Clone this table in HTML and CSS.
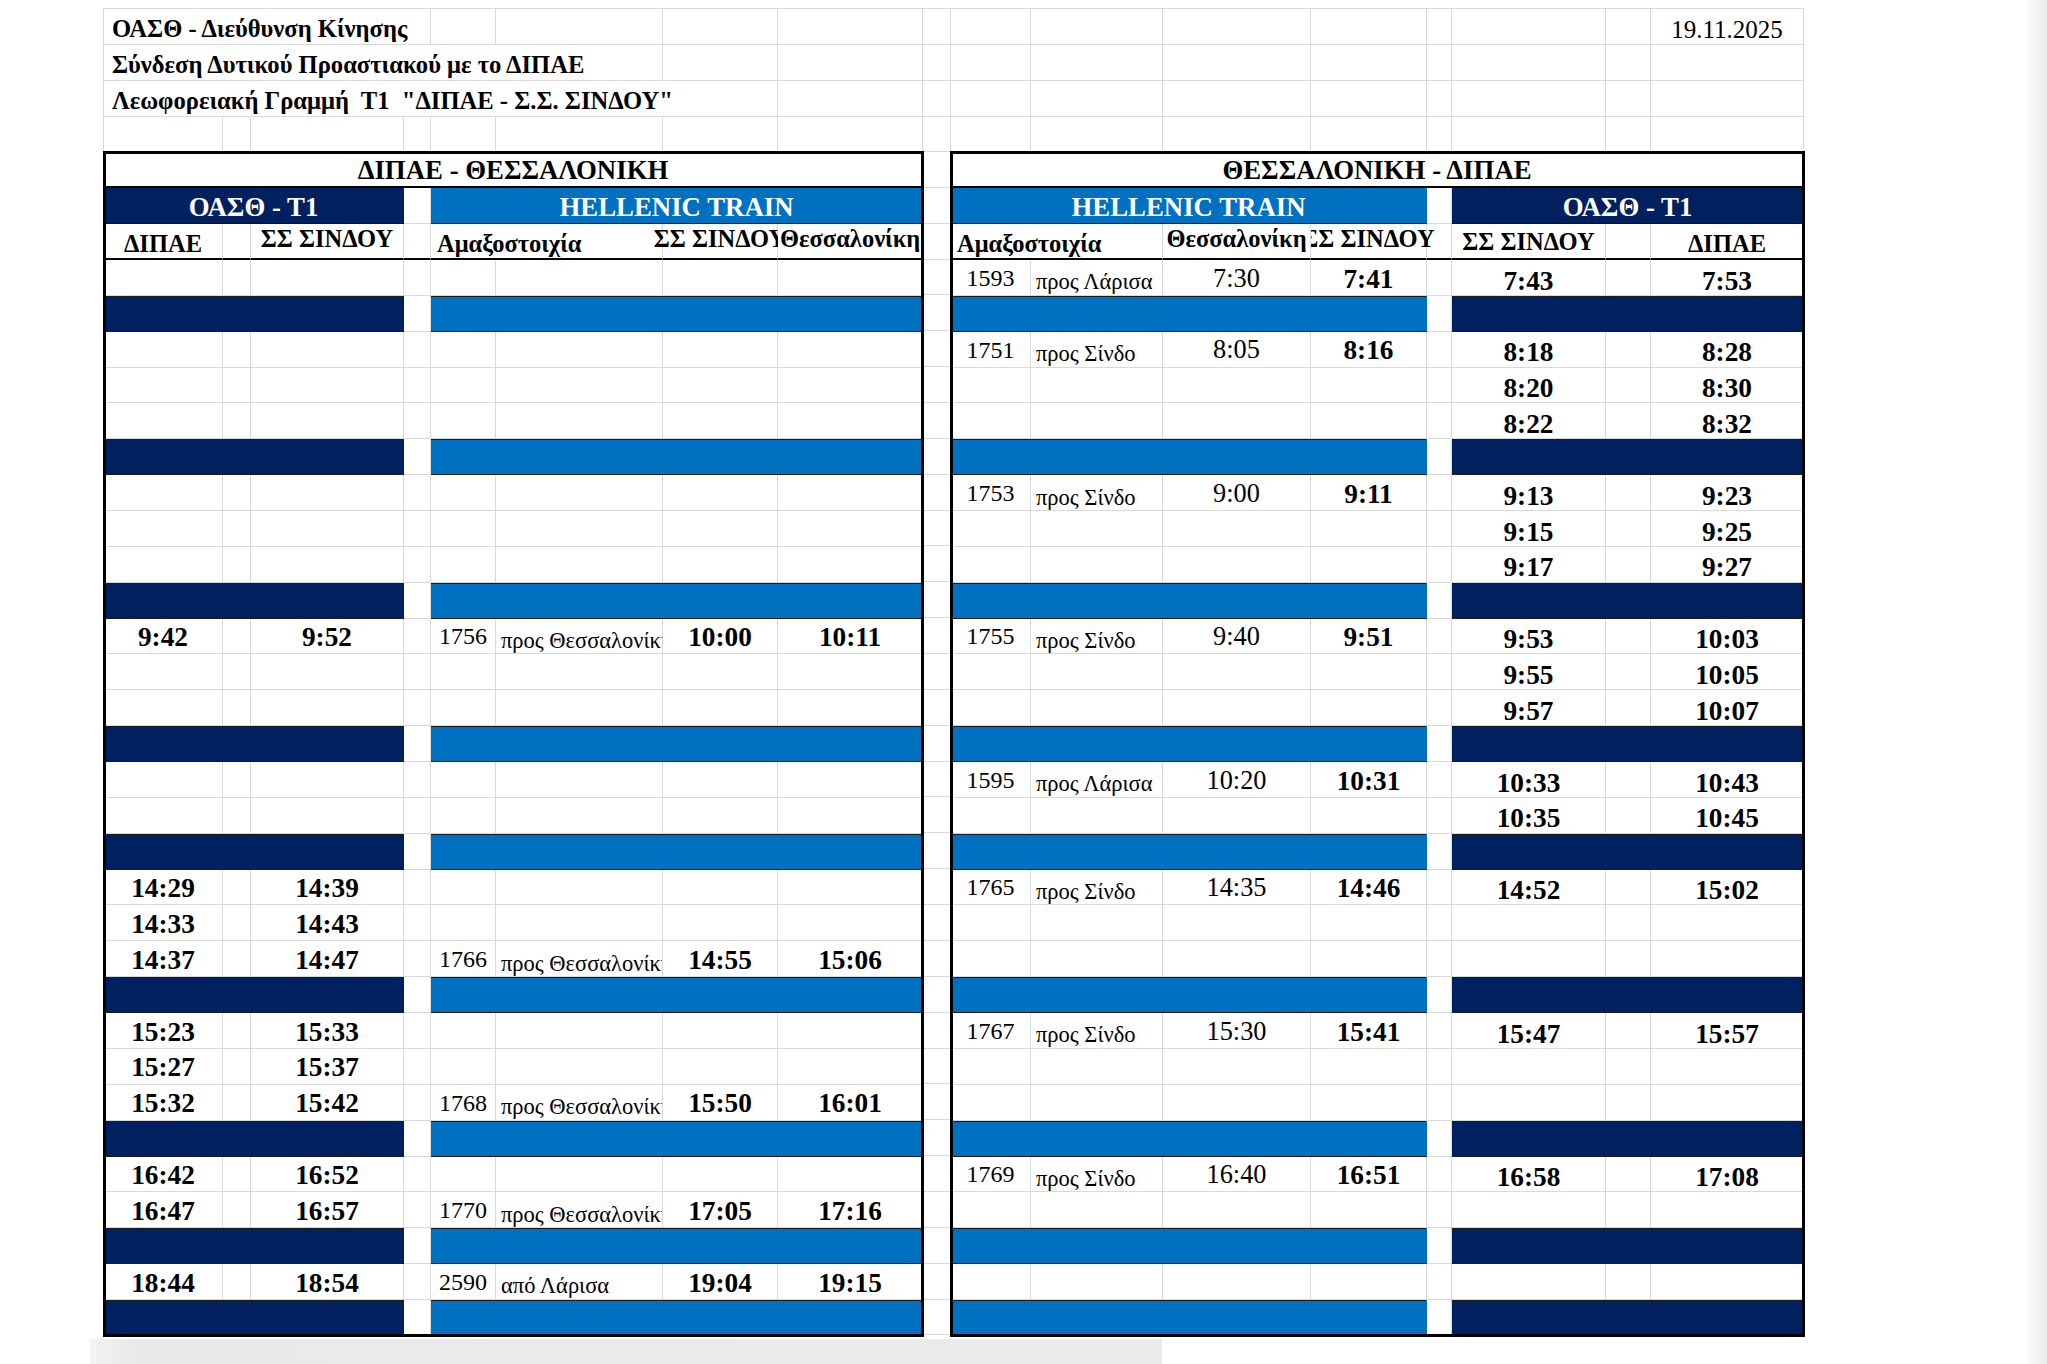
FILE: index.html
```html
<!DOCTYPE html>
<html lang="el">
<head>
<meta charset="utf-8">
<title>ΟΑΣΘ - Τ1</title>
<link rel="stylesheet" href="styles.css">
</head>
<body>
<div class="page">
  <div class="topgrid">
    <div class="c tt s4">ΟΑΣΘ - Διεύθυνση Κίνησης</div>
    <div class="c"></div><div class="c"></div><div class="c"></div><div class="c"></div><div class="c"></div><div class="c"></div><div class="c"></div><div class="c"></div><div class="c"></div><div class="c"></div><div class="c"></div><div class="c"></div>
    <div class="c date">19.11.2025</div>

    <div class="c tt s6">Σύνδεση Δυτικού Προαστιακού με το ΔΙΠΑΕ</div>
    <div class="c"></div><div class="c"></div><div class="c"></div><div class="c"></div><div class="c"></div><div class="c"></div><div class="c"></div><div class="c"></div><div class="c"></div><div class="c"></div><div class="c"></div>

    <div class="c tt s7">Λεωφορειακή Γραμμή&nbsp; Τ1&nbsp; "ΔΙΠΑΕ - Σ.Σ. ΣΙΝΔΟΥ"</div>
    <div class="c"></div><div class="c"></div><div class="c"></div><div class="c"></div><div class="c"></div><div class="c"></div><div class="c"></div><div class="c"></div><div class="c"></div><div class="c"></div>

    <div class="c"></div><div class="c"></div><div class="c"></div><div class="c"></div><div class="c"></div><div class="c"></div><div class="c"></div><div class="c"></div><div class="c"></div><div class="c"></div><div class="c"></div><div class="c"></div><div class="c"></div><div class="c"></div><div class="c"></div><div class="c"></div><div class="c"></div>
  </div>

  <div class="tables">
    <div class="tbl tl">
      <div class="c title s8">ΔΙΠΑΕ - ΘΕΣΣΑΛΟΝΙΚΗ</div>
      <div class="c navy hd s3">ΟΑΣΘ - Τ1</div><div class="c hdgap"></div><div class="c blue hd s4">HELLENIC TRAIN</div>
      <div class="c ch">ΔΙΠΑΕ</div><div class="c ch"></div><div class="c ch hi">ΣΣ ΣΙΝΔΟΥ</div><div class="c ch"></div><div class="c ch lft s2">Αμαξοστοιχία</div><div class="c ch hi">ΣΣ ΣΙΝΔΟΥ</div><div class="c ch hi lft tight cover">Θεσσαλονίκη</div>

      <div class="c"></div><div class="c"></div><div class="c"></div><div class="c"></div><div class="c"></div><div class="c"></div><div class="c"></div><div class="c"></div>
      <div class="c navy s3 sep"></div><div class="c"></div><div class="c blue s4 sep"></div>
      <div class="c"></div><div class="c"></div><div class="c"></div><div class="c"></div><div class="c"></div><div class="c"></div><div class="c"></div><div class="c"></div>
      <div class="c"></div><div class="c"></div><div class="c"></div><div class="c"></div><div class="c"></div><div class="c"></div><div class="c"></div><div class="c"></div>
      <div class="c"></div><div class="c"></div><div class="c"></div><div class="c"></div><div class="c"></div><div class="c"></div><div class="c"></div><div class="c"></div>
      <div class="c navy s3 sep"></div><div class="c"></div><div class="c blue s4 sep"></div>
      <div class="c"></div><div class="c"></div><div class="c"></div><div class="c"></div><div class="c"></div><div class="c"></div><div class="c"></div><div class="c"></div>
      <div class="c"></div><div class="c"></div><div class="c"></div><div class="c"></div><div class="c"></div><div class="c"></div><div class="c"></div><div class="c"></div>
      <div class="c"></div><div class="c"></div><div class="c"></div><div class="c"></div><div class="c"></div><div class="c"></div><div class="c"></div><div class="c"></div>
      <div class="c navy s3 sep"></div><div class="c"></div><div class="c blue s4 sep"></div>
      <div class="c b">9:42</div><div class="c"></div><div class="c b">9:52</div><div class="c"></div><div class="c n">1756</div><div class="c d">προς Θεσσαλονίκη</div><div class="c b">10:00</div><div class="c b">10:11</div>
      <div class="c"></div><div class="c"></div><div class="c"></div><div class="c"></div><div class="c"></div><div class="c"></div><div class="c"></div><div class="c"></div>
      <div class="c"></div><div class="c"></div><div class="c"></div><div class="c"></div><div class="c"></div><div class="c"></div><div class="c"></div><div class="c"></div>
      <div class="c navy s3 sep"></div><div class="c"></div><div class="c blue s4 sep"></div>
      <div class="c"></div><div class="c"></div><div class="c"></div><div class="c"></div><div class="c"></div><div class="c"></div><div class="c"></div><div class="c"></div>
      <div class="c"></div><div class="c"></div><div class="c"></div><div class="c"></div><div class="c"></div><div class="c"></div><div class="c"></div><div class="c"></div>
      <div class="c navy s3 sep"></div><div class="c"></div><div class="c blue s4 sep"></div>
      <div class="c b">14:29</div><div class="c"></div><div class="c b">14:39</div><div class="c"></div><div class="c"></div><div class="c"></div><div class="c"></div><div class="c"></div>
      <div class="c b">14:33</div><div class="c"></div><div class="c b">14:43</div><div class="c"></div><div class="c"></div><div class="c"></div><div class="c"></div><div class="c"></div>
      <div class="c b">14:37</div><div class="c"></div><div class="c b">14:47</div><div class="c"></div><div class="c n">1766</div><div class="c d">προς Θεσσαλονίκη</div><div class="c b">14:55</div><div class="c b">15:06</div>
      <div class="c navy s3 sep"></div><div class="c"></div><div class="c blue s4 sep"></div>
      <div class="c b">15:23</div><div class="c"></div><div class="c b">15:33</div><div class="c"></div><div class="c"></div><div class="c"></div><div class="c"></div><div class="c"></div>
      <div class="c b">15:27</div><div class="c"></div><div class="c b">15:37</div><div class="c"></div><div class="c"></div><div class="c"></div><div class="c"></div><div class="c"></div>
      <div class="c b">15:32</div><div class="c"></div><div class="c b">15:42</div><div class="c"></div><div class="c n">1768</div><div class="c d">προς Θεσσαλονίκη</div><div class="c b">15:50</div><div class="c b">16:01</div>
      <div class="c navy s3 sep"></div><div class="c"></div><div class="c blue s4 sep"></div>
      <div class="c b">16:42</div><div class="c"></div><div class="c b">16:52</div><div class="c"></div><div class="c"></div><div class="c"></div><div class="c"></div><div class="c"></div>
      <div class="c b">16:47</div><div class="c"></div><div class="c b">16:57</div><div class="c"></div><div class="c n">1770</div><div class="c d">προς Θεσσαλονίκη</div><div class="c b">17:05</div><div class="c b">17:16</div>
      <div class="c navy s3 sep"></div><div class="c"></div><div class="c blue s4 sep"></div>
      <div class="c b">18:44</div><div class="c"></div><div class="c b">18:54</div><div class="c"></div><div class="c n">2590</div><div class="c d">από Λάρισα</div><div class="c b">19:04</div><div class="c b">19:15</div>
      <div class="c navy s3 sep"></div><div class="c"></div><div class="c blue s4 sep"></div>
    </div>

    <div class="gapcol"></div>

    <div class="tbl tr">
      <div class="c title s8">ΘΕΣΣΑΛΟΝΙΚΗ - ΔΙΠΑΕ</div>
      <div class="c blue hd s4">HELLENIC TRAIN</div><div class="c hdgap"></div><div class="c navy hd s3">ΟΑΣΘ - Τ1</div>
      <div class="c ch lft s2">Αμαξοστοιχία</div><div class="c ch hi cover">Θεσσαλονίκη</div><div class="c ch hi">ΣΣ ΣΙΝΔΟΥ</div><div class="c ch"></div><div class="c ch mid">ΣΣ ΣΙΝΔΟΥ</div><div class="c ch"></div><div class="c ch">ΔΙΠΑΕ</div>

      <div class="c n">1593</div><div class="c d">προς Λάρισα</div><div class="c r">7:30</div><div class="c b">7:41</div><div class="c"></div><div class="c b bb">7:43</div><div class="c"></div><div class="c b bb">7:53</div>
      <div class="c blue s4 sep"></div><div class="c"></div><div class="c navy s3 sep"></div>
      <div class="c n">1751</div><div class="c d">προς Σίνδο</div><div class="c r">8:05</div><div class="c b">8:16</div><div class="c"></div><div class="c b bb">8:18</div><div class="c"></div><div class="c b bb">8:28</div>
      <div class="c"></div><div class="c"></div><div class="c"></div><div class="c"></div><div class="c"></div><div class="c b bb">8:20</div><div class="c"></div><div class="c b bb">8:30</div>
      <div class="c"></div><div class="c"></div><div class="c"></div><div class="c"></div><div class="c"></div><div class="c b bb">8:22</div><div class="c"></div><div class="c b bb">8:32</div>
      <div class="c blue s4 sep"></div><div class="c"></div><div class="c navy s3 sep"></div>
      <div class="c n">1753</div><div class="c d">προς Σίνδο</div><div class="c r">9:00</div><div class="c b">9:11</div><div class="c"></div><div class="c b bb">9:13</div><div class="c"></div><div class="c b bb">9:23</div>
      <div class="c"></div><div class="c"></div><div class="c"></div><div class="c"></div><div class="c"></div><div class="c b bb">9:15</div><div class="c"></div><div class="c b bb">9:25</div>
      <div class="c"></div><div class="c"></div><div class="c"></div><div class="c"></div><div class="c"></div><div class="c b bb">9:17</div><div class="c"></div><div class="c b bb">9:27</div>
      <div class="c blue s4 sep"></div><div class="c"></div><div class="c navy s3 sep"></div>
      <div class="c n">1755</div><div class="c d">προς Σίνδο</div><div class="c r">9:40</div><div class="c b">9:51</div><div class="c"></div><div class="c b bb">9:53</div><div class="c"></div><div class="c b bb">10:03</div>
      <div class="c"></div><div class="c"></div><div class="c"></div><div class="c"></div><div class="c"></div><div class="c b bb">9:55</div><div class="c"></div><div class="c b bb">10:05</div>
      <div class="c"></div><div class="c"></div><div class="c"></div><div class="c"></div><div class="c"></div><div class="c b bb">9:57</div><div class="c"></div><div class="c b bb">10:07</div>
      <div class="c blue s4 sep"></div><div class="c"></div><div class="c navy s3 sep"></div>
      <div class="c n">1595</div><div class="c d">προς Λάρισα</div><div class="c r">10:20</div><div class="c b">10:31</div><div class="c"></div><div class="c b bb">10:33</div><div class="c"></div><div class="c b bb">10:43</div>
      <div class="c"></div><div class="c"></div><div class="c"></div><div class="c"></div><div class="c"></div><div class="c b bb">10:35</div><div class="c"></div><div class="c b bb">10:45</div>
      <div class="c blue s4 sep"></div><div class="c"></div><div class="c navy s3 sep"></div>
      <div class="c n">1765</div><div class="c d">προς Σίνδο</div><div class="c r">14:35</div><div class="c b">14:46</div><div class="c"></div><div class="c b bb">14:52</div><div class="c"></div><div class="c b bb">15:02</div>
      <div class="c"></div><div class="c"></div><div class="c"></div><div class="c"></div><div class="c"></div><div class="c"></div><div class="c"></div><div class="c"></div>
      <div class="c"></div><div class="c"></div><div class="c"></div><div class="c"></div><div class="c"></div><div class="c"></div><div class="c"></div><div class="c"></div>
      <div class="c blue s4 sep"></div><div class="c"></div><div class="c navy s3 sep"></div>
      <div class="c n">1767</div><div class="c d">προς Σίνδο</div><div class="c r">15:30</div><div class="c b">15:41</div><div class="c"></div><div class="c b bb">15:47</div><div class="c"></div><div class="c b bb">15:57</div>
      <div class="c"></div><div class="c"></div><div class="c"></div><div class="c"></div><div class="c"></div><div class="c"></div><div class="c"></div><div class="c"></div>
      <div class="c"></div><div class="c"></div><div class="c"></div><div class="c"></div><div class="c"></div><div class="c"></div><div class="c"></div><div class="c"></div>
      <div class="c blue s4 sep"></div><div class="c"></div><div class="c navy s3 sep"></div>
      <div class="c n">1769</div><div class="c d">προς Σίνδο</div><div class="c r">16:40</div><div class="c b">16:51</div><div class="c"></div><div class="c b bb">16:58</div><div class="c"></div><div class="c b bb">17:08</div>
      <div class="c"></div><div class="c"></div><div class="c"></div><div class="c"></div><div class="c"></div><div class="c"></div><div class="c"></div><div class="c"></div>
      <div class="c blue s4 sep"></div><div class="c"></div><div class="c navy s3 sep"></div>
      <div class="c"></div><div class="c"></div><div class="c"></div><div class="c"></div><div class="c"></div><div class="c"></div><div class="c"></div><div class="c"></div>
      <div class="c blue s4 sep"></div><div class="c"></div><div class="c navy s3 sep"></div>
    </div>
  </div>

  <div class="foot"></div>
</div>
</body>
</html>
```

FILE: styles.css
```css
* { box-sizing: border-box; margin: 0; padding: 0; }
html, body { width: 2047px; height: 1364px; overflow: hidden; background: #fff; }
body { font-family: "Liberation Serif", "Times New Roman", serif; color: #000; }

.page {
  position: relative;
  height: 1364px;
  padding: 8px 0 0 103px;
}
.page::after {
  content: "";
  position: absolute;
  top: 0; right: 0;
  width: 22px; height: 100%;
  background: linear-gradient(to right, #ffffff, #f1f1f1 60%, #ececec);
}

.topgrid {
  display: grid;
  width: 1701px;
  grid-template-columns: 119px 28px 153px 27px 65px 167px 115px 145px 28px 80px 132px 148px 116px 25px 154px 45px 153px;
  grid-auto-rows: 35.86px;
  border-top: 1px solid #d9d9d9;
  border-left: 1px solid #d9d9d9;
}

.c {
  border-right: 1px solid #d9d9d9;
  border-bottom: 1px solid #d9d9d9;
  display: flex;
  align-items: flex-end;
  justify-content: center;
  white-space: nowrap;
  line-height: 1;
  padding-bottom: 1px;
  min-width: 0;
}
.s2 { grid-column: span 2; }
.s3 { grid-column: span 3; }
.s4 { grid-column: span 4; }
.s6 { grid-column: span 6; }
.s7 { grid-column: span 7; }
.s8 { grid-column: span 8; }

.tt {
  justify-content: flex-start;
  padding-left: 8px;
  padding-bottom: 2px;
  font-weight: bold;
  font-size: 24.6px;
}
.date { font-size: 25px; padding-bottom: 2px; }

.tables {
  display: flex;
  margin-left: 1px;
}
.tbl {
  display: grid;
  grid-auto-rows: 35.86px;
  position: relative;
}
.tbl::after {
  content: "";
  position: absolute;
  inset: -1px;
  border: 3px solid #000;
  pointer-events: none;
}
.tl { grid-template-columns: 119px 28px 153px 27px 65px 167px 115px 145px; }
.tr { grid-template-columns: 80px 132px 148px 116px 25px 154px 45px 153px; }

.gapcol {
  width: 28px;
  background: repeating-linear-gradient(to bottom, transparent 0, transparent 34.86px, #d9d9d9 34.86px, #d9d9d9 35.86px);
}

.title {
  font-weight: bold;
  font-size: 26.8px;
  border-bottom: 2px solid #000;
  padding-bottom: 3px;
}
.hd {
  color: #fff;
  font-weight: bold;
  font-size: 26.8px;
  padding-bottom: 2px;
  border-bottom: 1px solid #111;
}
.hdgap { border-bottom: 1px solid #d9d9d9; }
.navy { background: #002060; color: #fff; border-right-color: #002060; }
.blue { background: #0070c0; color: #fff; border-right-color: #0070c0; }
.sep { box-shadow: inset 0 1px 0 #1a1a1a; border-bottom: 1px solid #1a1a1a; }

.ch {
  font-weight: bold;
  font-size: 24.5px;
  border-bottom: 2px solid #000;
  padding-bottom: 2px;
}
.ch.hi { padding-bottom: 7px; }
.ch.mid { padding-bottom: 4px; }
.lft { justify-content: flex-start; padding-left: 6px; }
.lft.tight { padding-left: 2px; }
.cover { position: relative; background: #fff; }

.b { font-weight: bold; font-size: 27.3px; padding-bottom: 2px; }
.bb { padding-bottom: 0; }
.r { font-size: 26.3px; padding-bottom: 3px; }
.n { font-size: 24px; padding-bottom: 5px; }
.d {
  justify-content: flex-start;
  padding-left: 5px;
  overflow: hidden;
  font-size: 22.5px;
  padding-bottom: 1px;
}

.foot {
  margin: 3px 0 0 -13px;
  width: 1072px;
  height: 26px;
  background: linear-gradient(to right, #f3f3f3, #e9e9e9 4%, #ebebeb);
}
```
